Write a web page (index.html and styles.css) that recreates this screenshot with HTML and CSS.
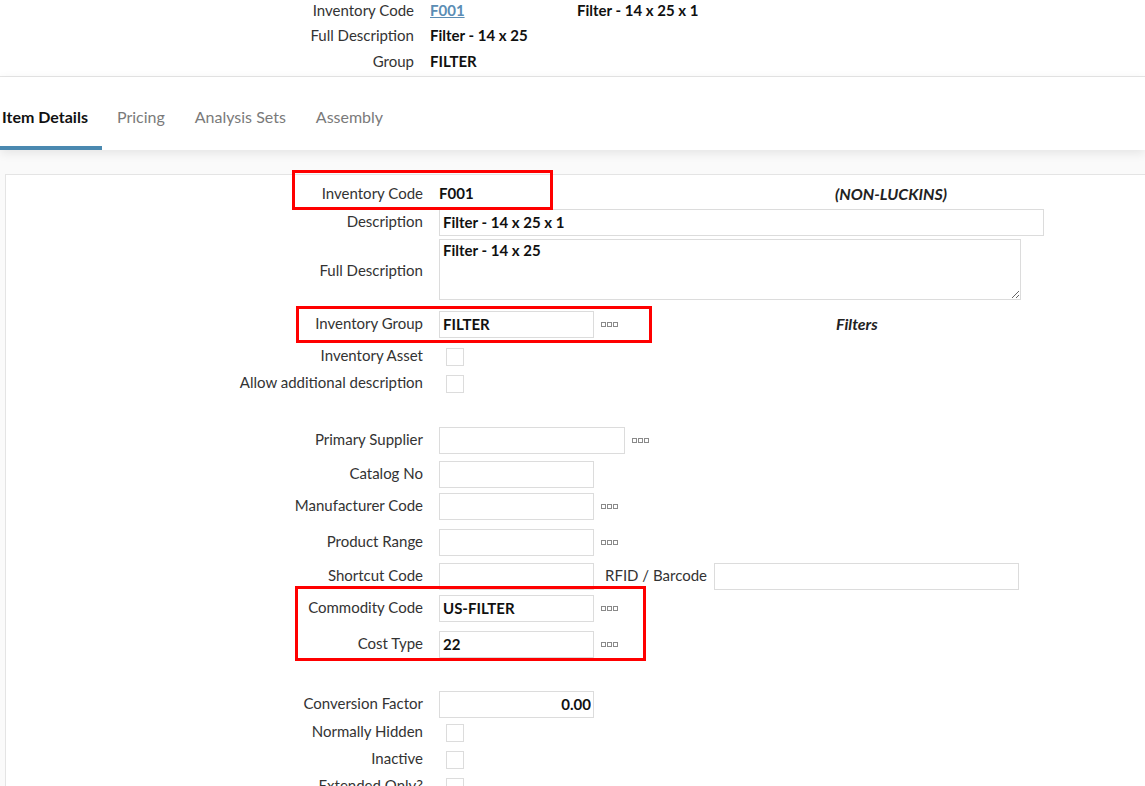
FILE: index.html
```html
<!DOCTYPE html>
<html lang="en">
<head>
<meta charset="utf-8">
<title>Inventory Item</title>
<link rel="stylesheet" href="styles.css">
</head>
<body>
<header class="hdr">
  <div class="hdr-rows">
    <div class="hrow"><span class="hlbl">Inventory Code</span><span class="hval"><a class="link" href="#">F001</a></span><span class="hextra">Filter - 14 x 25 x 1</span></div>
    <div class="hrow"><span class="hlbl">Full Description</span><span class="hval">Filter - 14 x 25</span></div>
    <div class="hrow"><span class="hlbl">Group</span><span class="hval">FILTER</span></div>
  </div>
</header>

<nav class="tabs">
  <span class="tab active">Item Details</span>
  <span class="tab">Pricing</span>
  <span class="tab">Analysis Sets</span>
  <span class="tab">Assembly</span>
</nav>

<main class="content">
  <section class="panel">
    <div class="row r-code">
      <span class="lbl">Inventory Code</span>
      <span class="val-block"><b class="val">F001</b></span>
      <i class="note">(NON-LUCKINS)</i>
    </div>
    <div class="row r-1">
      <span class="lbl">Description</span>
      <input class="inp w-desc" value="Filter - 14 x 25 x 1" readonly>
    </div>
    <div class="row r-3 r-top">
      <span class="lbl lbl-mid">Full Description</span>
      <textarea class="inp txt" readonly>Filter - 14 x 25</textarea>
    </div>
    <div class="row r-11">
      <span class="lbl">Inventory Group</span>
      <span class="ctl-block">
        <input class="inp" value="FILTER" readonly>
        <svg class="dots" viewBox="0 0 18 6" width="18" height="6"><rect x="0.5" y="0.5" width="4" height="4"/><rect x="6.5" y="0.5" width="4" height="4"/><rect x="12.5" y="0.5" width="4" height="4"/></svg>
      </span>
      <i class="note">Filters</i>
    </div>
    <div class="row r-5 chk-row">
      <span class="lbl">Inventory Asset</span>
      <span class="chk"></span>
    </div>
    <div class="row chk-row">
      <span class="lbl">Allow additional description</span>
      <span class="chk"></span>
    </div>

    <div class="row r-30">
      <span class="lbl">Primary Supplier</span>
      <input class="inp w-sup" value="" readonly>
      <svg class="dots" viewBox="0 0 18 6" width="18" height="6"><rect x="0.5" y="0.5" width="4" height="4"/><rect x="6.5" y="0.5" width="4" height="4"/><rect x="12.5" y="0.5" width="4" height="4"/></svg>
    </div>
    <div class="row r-7">
      <span class="lbl">Catalog No</span>
      <input class="inp" value="" readonly>
    </div>
    <div class="row r-5">
      <span class="lbl">Manufacturer Code</span>
      <input class="inp" value="" readonly>
      <svg class="dots" viewBox="0 0 18 6" width="18" height="6"><rect x="0.5" y="0.5" width="4" height="4"/><rect x="6.5" y="0.5" width="4" height="4"/><rect x="12.5" y="0.5" width="4" height="4"/></svg>
    </div>
    <div class="row r-9">
      <span class="lbl">Product Range</span>
      <input class="inp" value="" readonly>
      <svg class="dots" viewBox="0 0 18 6" width="18" height="6"><rect x="0.5" y="0.5" width="4" height="4"/><rect x="6.5" y="0.5" width="4" height="4"/><rect x="12.5" y="0.5" width="4" height="4"/></svg>
    </div>
    <div class="row r-7">
      <span class="lbl">Shortcut Code</span>
      <input class="inp" value="" readonly>
      <span class="lbl-inline">RFID / Barcode</span>
      <input class="inp w-rfid" value="" readonly>
    </div>
    <div class="row r-5">
      <span class="lbl">Commodity Code</span>
      <input class="inp" value="US-FILTER" readonly>
      <svg class="dots" viewBox="0 0 18 6" width="18" height="6"><rect x="0.5" y="0.5" width="4" height="4"/><rect x="6.5" y="0.5" width="4" height="4"/><rect x="12.5" y="0.5" width="4" height="4"/></svg>
    </div>
    <div class="row r-9">
      <span class="lbl">Cost Type</span>
      <input class="inp" value="22" readonly>
      <svg class="dots" viewBox="0 0 18 6" width="18" height="6"><rect x="0.5" y="0.5" width="4" height="4"/><rect x="6.5" y="0.5" width="4" height="4"/><rect x="12.5" y="0.5" width="4" height="4"/></svg>
    </div>

    <div class="row r-33">
      <span class="lbl">Conversion Factor</span>
      <input class="inp num" value="0.00" readonly>
    </div>
    <div class="row r-1 chk-row">
      <span class="lbl">Normally Hidden</span>
      <span class="chk"></span>
    </div>
    <div class="row chk-row">
      <span class="lbl">Inactive</span>
      <span class="chk"></span>
    </div>
    <div class="row chk-row">
      <span class="lbl">Extended Only?</span>
      <span class="chk"></span>
    </div>

    <div class="mark mark-code"></div>
    <div class="mark mark-group"></div>
    <div class="mark mark-comm"></div>
  </section>
</main>
</body>
</html>
```

FILE: styles.css
```css
html, body {
  margin: 0;
  padding: 0;
  background: #ffffff;
  font-family: Lato, "Open Sans", "Liberation Sans", sans-serif;
  font-size: 15px;
  color: #333;
  overflow: hidden;
}

/* ---------- header ---------- */
.hdr {
  height: 77px;
  box-sizing: border-box;
  border-bottom: 1px solid #e6e6e6;
  overflow: hidden;
}
.hdr-rows {
  margin-top: -3px;
}
.hrow {
  display: flex;
  height: 25.5px;
  align-items: center;
}
.hlbl {
  width: 414px;
  text-align: right;
  margin-right: 16px;
  color: #333;
}
.hval {
  width: 147px;
  font-weight: 700;
  color: #111;
}
.hextra {
  font-weight: 700;
  color: #111;
}
.link {
  color: #5b8db4;
  text-decoration: underline;
}

/* ---------- tabs ---------- */
.tabs {
  display: flex;
  height: 73px;
  background: #fff;
  position: relative;
  z-index: 1;
  box-shadow: 0 3px 10px rgba(0, 0, 0, 0.09);
}
.tab {
  box-sizing: border-box;
  height: 73px;
  padding: 30px 15px 0;
  line-height: 20px;
  font-size: 16px;
  color: #7a7a7a;
  border-bottom: 4px solid transparent;
}
.tab.active {
  margin-left: -12px;
  padding-left: 14px;
  padding-right: 14px;
  color: #111;
  font-weight: 700;
  border-bottom-color: #4a89b0;
}

/* ---------- content ---------- */
.content {
  background: #fafafa;
  padding: 24px 0 0 5px;
}
.panel {
  position: relative;
  background: #fff;
  border-top: 1px solid #e4e4e4;
  border-left: 1px solid #e4e4e4;
  padding-top: 3px;
  height: 640px;
}

.row {
  display: flex;
  align-items: center;
  min-height: 27px;
}
.r-code { height: 30px; }
.r-1 { margin-top: 1px; }
.r-3 { margin-top: 3px; }
.r-5 { margin-top: 5px; }
.r-7 { margin-top: 7px; }
.r-9 { margin-top: 9px; }
.r-11 { margin-top: 11px; }
.r-30 { margin-top: 30px; }
.r-33 { margin-top: 33px; }
.r-top { align-items: flex-start; }

.lbl {
  width: 417px;
  flex: none;
  text-align: right;
  margin-right: 16px;
  padding-bottom: 3px;
  color: #333;
  white-space: nowrap;
}
.r-code .lbl {
  padding-bottom: 0;
}
.lbl-mid {
  align-self: center;
  padding-bottom: 0;
}
.val-block {
  width: 396px;
  flex: none;
}
.val {
  font-weight: 700;
  color: #111;
}
.note {
  font-size: 16px;
  font-weight: 700;
  font-style: italic;
  color: #222;
  padding-bottom: 2px;
}
.r-code .note {
  padding-bottom: 0;
}
.ctl-block {
  width: 397px;
  flex: none;
  display: flex;
  align-items: center;
}

.inp {
  box-sizing: border-box;
  width: 155px;
  height: 27px;
  margin: 0;
  padding: 0 3px 1px;
  border: 1px solid #dcdcdc;
  border-radius: 0;
  background: #fff;
  font-family: Lato, "Open Sans", "Liberation Sans", sans-serif;
  font-size: 15px;
  font-weight: 700;
  color: #111;
  outline: none;
}
.w-desc { width: 605px; }
.w-sup { width: 186px; }
.w-rfid { width: 305px; }
.txt {
  width: 582px;
  height: 61px;
  padding: 1px 3px;
  line-height: 18px;
  resize: both;
  display: block;
}
.num {
  text-align: right;
  padding-right: 2px;
}

.dots {
  flex: none;
  margin-left: 7px;
  fill: none;
  stroke: #8a8a8a;
  stroke-width: 1;
}

.lbl-inline {
  margin: 0 7px 0 11px;
  padding-bottom: 3px;
  color: #333;
  white-space: nowrap;
}

.chk-row {
  height: 27px;
}
.chk {
  box-sizing: border-box;
  width: 18px;
  height: 18px;
  margin-left: 7px;
  border: 1px solid #dcdcdc;
  background: #fff;
}

/* annotation frames */
.mark {
  position: absolute;
  box-sizing: border-box;
  border: 3px solid #ff0000;
  pointer-events: none;
}
.mark-code {
  left: 286px;
  top: -5px;
  width: 261px;
  height: 40px;
}
.mark-group {
  left: 290px;
  top: 131px;
  width: 356px;
  height: 37px;
}
.mark-comm {
  left: 289px;
  top: 411px;
  width: 351px;
  height: 75px;
}
```
